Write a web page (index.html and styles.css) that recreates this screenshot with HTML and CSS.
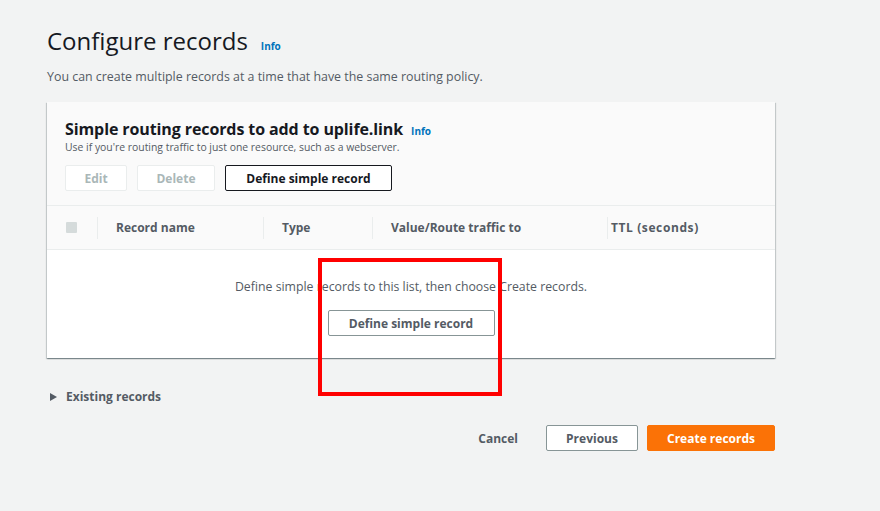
FILE: index.html
```html
<!DOCTYPE html>
<html lang="en">

<head>
    <meta charset="UTF-8">
    <title>Configure records</title>
    <link rel="stylesheet" href="styles.css">
</head>

<body>
    <div class="page">
        <div class="page_head">
            <h1>Configure records</h1>
            <a class="info">Info</a>
        </div>
        <p class="page_desc">You can create multiple records at a time that have the same routing policy.</p>

        <div class="card">
            <div class="card_head">
                <div class="card_title">
                    <h2>Simple routing records to add to uplife.link</h2>
                    <a class="info">Info</a>
                </div>
                <p class="card_desc">Use if you're routing traffic to just one resource, such as a webserver.</p>
                <div class="actions">
                    <button class="btn disabled btn_edit">Edit</button>
                    <button class="btn disabled btn_delete">Delete</button>
                    <button class="btn dark btn_define">Define simple record</button>
                </div>
            </div>
            <div class="table_head">
                <div class="col col_check"><span class="checkbox"></span></div>
                <div class="col col_name">Record name</div>
                <div class="col col_type">Type</div>
                <div class="col col_value">Value/Route traffic to</div>
                <div class="col col_ttl">TTL (seconds)</div>
            </div>
            <div class="table_empty">
                <p>Define simple records to this list, then choose Create records.</p>
                <button class="btn btn_define_empty">Define simple record</button>
            </div>
        </div>

        <div class="existing">
            <span class="caret"></span>
            <span>Existing records</span>
        </div>

        <div class="footer">
            <button class="link_btn">Cancel</button>
            <button class="btn btn_prev">Previous</button>
            <button class="btn primary">Create records</button>
        </div>

        <!-- annotation drawn on top of the screenshot -->
        <div class="highlight"></div>
    </div>
</body>

</html>
```

FILE: styles.css
```css
body {
    margin: 0px;
    padding: 0px;
    background-color: #f2f3f3;
    font-family: "Open Sans", "Noto Sans", sans-serif;
    color: #16191f;
}

.page {
    position: relative;
    width: 728px;
    padding: 24px 0px 0px 47px;
    height: 487px;
}

.page_head {
    display: flex;
    align-items: baseline;
    height: 34px;
}

h1 {
    margin: 0px;
    font-size: 24px;
    font-weight: 400;
    line-height: 34px;
}

.info {
    margin-left: 13px;
    font-size: 10px;
    font-weight: 700;
    color: #0073bb;
    text-decoration: none;
}

.page_desc {
    margin: 10px 0px 0px 0px;
    font-size: 12.4px;
    line-height: 17px;
    color: #545b64;
}

.card {
    margin-top: 17px;
    background-color: #ffffff;
    box-shadow: 0px 1px 1px 0px rgba(0, 28, 36, 0.3), 1px 1px 1px 0px rgba(0, 28, 36, 0.15), -1px 1px 1px 0px rgba(0, 28, 36, 0.15);
}

.card_head {
    background-color: #fafafa;
    padding: 17px 18px 14px 18px;
    border-bottom: 1px solid #eaeded;
}

.card_title {
    display: flex;
    align-items: baseline;
}

h2 {
    margin: 0px;
    font-size: 16px;
    font-weight: 700;
    line-height: 20px;
    letter-spacing: -0.1px;
}

.card_title .info {
    margin-left: 8px;
}

.card_desc {
    margin: 1px 0px 0px 0px;
    font-size: 10.4px;
    line-height: 14px;
    color: #545b64;
}

.actions {
    display: flex;
    gap: 10px;
    margin-top: 11px;
}

.btn {
    display: flex;
    justify-content: center;
    align-items: center;
    height: 26px;
    padding: 0px;
    border: 1px solid #879596;
    border-radius: 2px;
    background-color: #ffffff;
    font-family: "Open Sans", "Noto Sans", sans-serif;
    font-size: 12px;
    font-weight: 700;
    color: #545b64;
    box-sizing: border-box;
}

.disabled {
    border-color: #eaeded;
    color: #aab7b8;
}

.dark {
    border-color: #16191f;
    color: #16191f;
}

.btn_edit {
    width: 62px;
}

.btn_delete {
    width: 78px;
}

.btn_define {
    width: 167px;
}

.table_head {
    display: flex;
    align-items: center;
    height: 43px;
    background-color: #fafafa;
    border-bottom: 1px solid #eaeded;
    font-size: 12px;
    font-weight: 700;
    color: #545b64;
}

.col {
    display: flex;
    align-items: center;
    height: 22px;
    border-left: 1px solid #eaeded;
    box-sizing: border-box;
}

.col_check {
    width: 50px;
    padding-left: 19px;
    border-left: none;
}

.checkbox {
    width: 11px;
    height: 11px;
    background-color: #d5dbdb;
    border-radius: 1px;
}

.col_name {
    width: 166px;
    padding-left: 18px;
}

.col_type {
    width: 109px;
    padding-left: 18px;
}

.col_value {
    width: 235px;
    padding-left: 18px;
}

.col_ttl {
    flex: 1;
    padding-left: 3px;
    letter-spacing: 0.6px;
}

.table_empty {
    display: flex;
    flex-direction: column;
    align-items: center;
    height: 108px;
    padding-top: 28px;
    box-sizing: border-box;
}

.table_empty p {
    margin: 0px;
    font-size: 12.3px;
    line-height: 17px;
    color: #545b64;
}

.btn_define_empty {
    margin-top: 15px;
    width: 167px;
}

.existing {
    display: flex;
    align-items: center;
    margin-top: 30px;
    font-size: 12px;
    font-weight: 700;
    color: #545b64;
    height: 17px;
}

.caret {
    width: 0px;
    height: 0px;
    margin: 0px 9px 0px 3px;
    border-top: 4px solid transparent;
    border-bottom: 4px solid transparent;
    border-left: 7px solid #545b64;
}

.footer {
    display: flex;
    justify-content: flex-end;
    align-items: center;
    gap: 9px;
    margin-top: 20px;
}

.link_btn {
    border: none;
    background: none;
    padding: 0px;
    margin-right: 19px;
    font-family: "Open Sans", "Noto Sans", sans-serif;
    font-size: 12px;
    font-weight: 700;
    color: #545b64;
}

.btn_prev {
    width: 92px;
}

.primary {
    width: 128px;
    background-color: #fb7206;
    border-color: #fb7206;
    color: #ffffff;
}

.highlight {
    position: absolute;
    left: 318px;
    top: 258px;
    width: 176px;
    height: 130px;
    border: 4px solid #ff0000;
}
```
